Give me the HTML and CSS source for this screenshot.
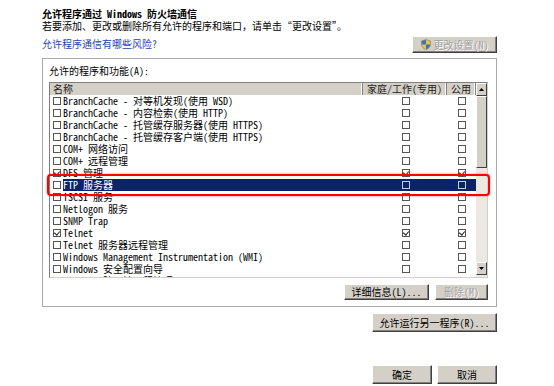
FILE: index.html
```html
<!DOCTYPE html>
<html lang="zh-CN">
<head>
<meta charset="utf-8">
<title>允许的程序</title>
<link rel="stylesheet" href="styles.css">
</head>
<body>
<div class="dlg">
  <div class="title">允许程序通过 Windows 防火墙通信</div>
  <div class="sub">若要添加、更改或删除所有允许的程序和端口，请单击“更改设置”。</div>
  <div class="linkrow">
    <a class="link" href="#">允许程序通信有哪些风险?</a>
    <button class="btn dis change"><svg class="shield" width="10" height="11" viewBox="0 0 10 11"><path d="M5 0.5 L9.5 2 V5.5 C9.5 8 7.5 9.8 5 10.5 C2.5 9.8 0.5 8 0.5 5.5 V2 Z" fill="#e8c640" stroke="#8a7a40" stroke-width="0.6"/><path d="M5 0.8 V5.5 H0.8 V2.1 Z" fill="#3a6fd0"/><path d="M5 5.5 H9.2 C9.1 7.8 7.3 9.6 5 10.2 Z" fill="#3a6fd0"/></svg>更改设置(N)</button>
  </div>
  <div class="group">
    <div class="glabel">允许的程序和功能(A):</div>
    <div class="list">
      <div class="table">
        <div class="hdr">
          <span class="hc name">名称</span>
          <span class="hc home">家庭/工作(专用)</span>
          <span class="hc pub">公用</span>
        </div>
        <div class="rows">
          <div class="row"><span class="n"><i class="cb"></i>BranchCache - 对等机发现(使用 WSD)</span><span class="c"><i class="cb"></i></span><span class="c"><i class="cb"></i></span></div>
          <div class="row"><span class="n"><i class="cb"></i>BranchCache - 内容检索(使用 HTTP)</span><span class="c"><i class="cb"></i></span><span class="c"><i class="cb"></i></span></div>
          <div class="row"><span class="n"><i class="cb"></i>BranchCache - 托管缓存服务器(使用 HTTPS)</span><span class="c"><i class="cb"></i></span><span class="c"><i class="cb"></i></span></div>
          <div class="row"><span class="n"><i class="cb"></i>BranchCache - 托管缓存客户端(使用 HTTPS)</span><span class="c"><i class="cb"></i></span><span class="c"><i class="cb"></i></span></div>
          <div class="row"><span class="n"><i class="cb"></i>COM+ 网络访问</span><span class="c"><i class="cb"></i></span><span class="c"><i class="cb"></i></span></div>
          <div class="row"><span class="n"><i class="cb"></i>COM+ 远程管理</span><span class="c"><i class="cb"></i></span><span class="c"><i class="cb"></i></span></div>
          <div class="row"><span class="n"><i class="cb on"></i>DFS 管理</span><span class="c"><i class="cb on"></i></span><span class="c"><i class="cb on"></i></span></div>
          <div class="row sel"><span class="n"><i class="cb"></i><span class="t">FTP 服务器</span></span><span class="c"><i class="cb"></i></span><span class="c"><i class="cb"></i></span></div>
          <div class="row"><span class="n"><i class="cb"></i>iSCSI 服务</span><span class="c"><i class="cb"></i></span><span class="c"><i class="cb"></i></span></div>
          <div class="row"><span class="n"><i class="cb"></i>Netlogon 服务</span><span class="c"><i class="cb"></i></span><span class="c"><i class="cb"></i></span></div>
          <div class="row"><span class="n"><i class="cb"></i>SNMP Trap</span><span class="c"><i class="cb"></i></span><span class="c"><i class="cb"></i></span></div>
          <div class="row"><span class="n"><i class="cb on"></i>Telnet</span><span class="c"><i class="cb on"></i></span><span class="c"><i class="cb on"></i></span></div>
          <div class="row"><span class="n"><i class="cb"></i>Telnet 服务器远程管理</span><span class="c"><i class="cb"></i></span><span class="c"><i class="cb"></i></span></div>
          <div class="row"><span class="n"><i class="cb"></i>Windows Management Instrumentation (WMI)</span><span class="c"><i class="cb"></i></span><span class="c"><i class="cb"></i></span></div>
          <div class="row"><span class="n"><i class="cb"></i>Windows 安全配置向导</span><span class="c"><i class="cb"></i></span><span class="c"><i class="cb"></i></span></div>
          <div class="row"><span class="n"><i class="cb"></i>Windows 防火墙远程管理</span><span class="c"><i class="cb"></i></span><span class="c"><i class="cb"></i></span></div>
        </div>
      </div>
      <div class="sb">
        <div class="sbtn"><svg width="5" height="3" viewBox="0 0 5 3"><path d="M0 3 L2.5 0 L5 3 Z" fill="#000"/></svg></div>
        <div class="thumb"></div>
        <div class="track"></div>
        <div class="sbtn"><svg width="5" height="3" viewBox="0 0 5 3"><path d="M0 0 L2.5 3 L5 0 Z" fill="#000"/></svg></div>
      </div>
      <div class="hl"></div>
    </div>
    <div class="gbtns">
      <button class="btn details">详细信息(L)...</button>
      <button class="btn dis remove">删除(M)</button>
    </div>
  </div>
  <div class="another"><button class="btn allow">允许运行另一程序(R)...</button></div>
  <div class="footer">
    <button class="btn ok">确定</button>
    <button class="btn ok">取消</button>
  </div>
</div>
</body>
</html>
```

FILE: styles.css
```css
* { box-sizing: border-box; }
html, body { margin: 0; padding: 0; background: #fff; }
body {
  font-family: "Noto Sans Mono CJK SC", "Noto Sans CJK SC", sans-serif;
  font-size: 10px;
  line-height: 12px;
  color: #000;
}
.dlg {
  width: 554px;
  height: 386px;
  padding: 8px 57px 0 42px;
}
.title { font-weight: bold; height: 12px; }
.sub { height: 12px; }
.linkrow {
  display: flex;
  justify-content: space-between;
  align-items: center;
  margin-top: 4px;
  height: 17px;
}
.link { color: #2b3fae; text-decoration: none; margin-top: -2px; }
.btn {
  font-family: inherit;
  font-size: 10px;
  line-height: 12px;
  color: #000;
  background: #d4d0c8;
  border: 1px solid;
  border-color: #fff #404040 #404040 #fff;
  box-shadow: inset -1px -1px 0 #808080;
  padding: 0 4px;
  margin: 0;
  display: flex;
  align-items: center;
  justify-content: center;
}
.btn.dis { color: #a0a0a0; text-shadow: 1px 1px 0 #fff; }
.change { width: 85px; height: 17px; gap: 3px; }
.shield { flex: none; }
.group {
  margin-top: 5px;
  height: 249px;
  border: 1px solid #a9a9a9;
  padding: 6px 8px 0 6px;
}
.glabel { height: 12px; }
.list {
  position: relative;
  margin-top: 5px;
  height: 196px;
  border: 1px solid #808080;
  border-right-color: #d4d0c8;
  border-bottom-color: #d4d0c8;
  display: flex;
}
.table { flex: 1; min-width: 0; display: flex; flex-direction: column; }
.hdr {
  display: grid;
  grid-template-columns: 1fr 84px 29px;
  height: 12px;
  background: #d4d0c8;
  color: #222;
}
.hc { border-right: 1px solid #808080; box-shadow: inset -1px 0 0 #fff; padding-left: 3px; white-space: nowrap; }
.hc.home { padding-left: 4px; }
.hc.pub { padding-left: 4px; }
.rows { flex: 1; overflow: hidden; }
.row {
  display: grid;
  grid-template-columns: 1fr 84px 29px;
  height: 12px;
  align-items: center;
  white-space: nowrap;
}
.n { display: flex; align-items: center; padding-left: 3px; height: 12px; }
.n .cb { margin-right: 2px; }
.c { display: flex; justify-content: center; align-items: center; height: 12px; }
.c:nth-child(2) { padding-left: 2px; }
.c:nth-child(3) { padding-left: 1px; }
.cb {
  display: inline-block;
  width: 8px;
  height: 8px;
  border: 1px solid #555;
  background: #fff;
  position: relative;
  flex: none;
}
.cb.on::after {
  content: "";
  position: absolute;
  left: 1px;
  top: 0;
  width: 3px;
  height: 4px;
  border: solid #222;
  border-width: 0 1px 1px 0;
  transform: rotate(40deg);
}
.row.sel { background: linear-gradient(to right, #fff 13px, #0a246a 13px); color: #fff; }
.row.sel .c .cb { background: transparent; border-color: #c8cce0; }
.sb {
  width: 11px;
  display: flex;
  flex-direction: column;
  background: #ece9e2;
}
.sbtn {
  height: 13px;
  background: #d4d0c8;
  border: 1px solid;
  border-color: #fff #404040 #404040 #fff;
  display: flex;
  align-items: center;
  justify-content: center;
  flex: none;
}
.thumb {
  height: 72px;
  background: #d4d0c8;
  border: 1px solid;
  border-color: #fff #404040 #404040 #fff;
  flex: none;
}
.track { flex: 1; }
.sb .sbtn:last-child { margin-bottom: 2px; }
.hl {
  position: absolute;
  left: -3px;
  top: 91px;
  width: 443px;
  height: 22px;
  border: 2px solid #f00;
  border-radius: 4px;
  box-shadow: 0 0 2px rgba(255, 0, 0, 0.6);
  pointer-events: none;
}
.gbtns {
  display: flex;
  justify-content: flex-end;
  gap: 6px;
  margin-top: 6px;
  padding-right: 0;
}
.details { width: 85px; height: 16px; }
.remove { width: 53px; height: 16px; }
.another { display: flex; justify-content: flex-end; margin-top: 6px; }
.allow { width: 125px; height: 19px; }
.footer { display: flex; justify-content: flex-end; gap: 5px; margin-top: 33px; }
.ok { width: 60px; height: 19px; }
```
